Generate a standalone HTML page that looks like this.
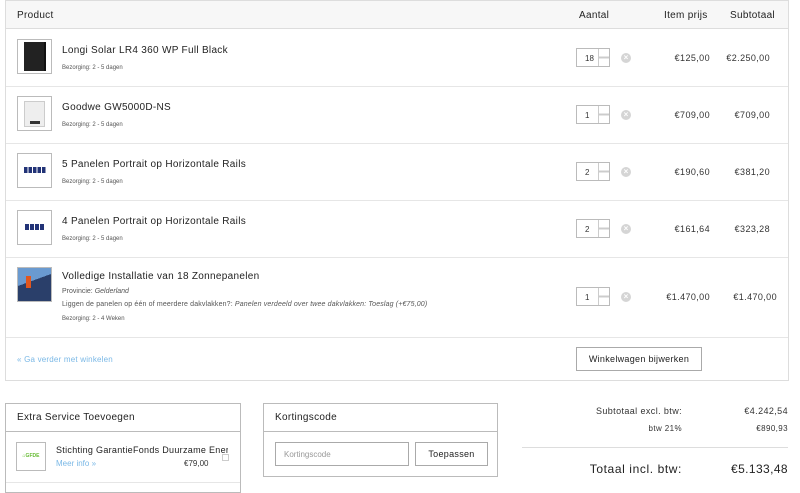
<!DOCTYPE html>
<html><head><meta charset="utf-8"><style>
*{box-sizing:border-box;margin:0;padding:0}
body{width:800px;height:490px;overflow:hidden;background:#fff;font-family:"Liberation Sans",sans-serif;color:#222;position:relative}
.abs{position:absolute;white-space:nowrap}
.box{position:absolute;border:1px solid #ddd}
.row{position:absolute;left:6px;width:782px;border-top:1px solid #e6e6e6}
.grp{position:absolute;left:0;width:800px;height:80px}
.thumb{position:absolute;left:11px;width:35px;height:35px;border:1px solid #bbb;background:#fff}
.name{position:absolute;left:56px;font-size:10px;letter-spacing:.3px;color:#222;white-space:nowrap}
.small{position:absolute;left:56px;font-size:6px;color:#555;white-space:nowrap}
.qty{position:absolute;left:570px;width:34px;height:19px;border:1px solid #bbb;font-size:8px;color:#333;padding:5px 0 0 8px;background:#fff}
.qty:after{content:"";position:absolute;right:0;top:0;width:10px;height:17px;border-left:1px solid #ccc;background:linear-gradient(#fff 45%,#ccc 45%,#ccc 55%,#fff 55%)}
.x{position:absolute;left:615px;width:10px;height:10px;border-radius:50%;background:#d5d5d5;color:#fff;font-size:8px;line-height:10px;text-align:center;font-weight:bold}
.p{position:absolute;font-size:9px;letter-spacing:.4px;color:#333;text-align:right;white-space:nowrap}
</style></head><body>
<div class="box" style="left:5px;top:0;width:784px;height:381px"></div>
<div class="abs" style="left:6px;top:1px;width:782px;height:28px;background:#f7f7f7;border-bottom:1px solid #ddd"></div>
<div class="abs" style="left:17px;top:10px;font-size:10px;letter-spacing:.3px">Product</div>
<div class="abs" style="left:579px;top:10px;font-size:10px;letter-spacing:.3px">Aantal</div>
<div class="abs" style="left:664px;top:10px;font-size:10px;letter-spacing:.3px">Item prijs</div>
<div class="abs" style="left:730px;top:10px;font-size:10px;letter-spacing:.3px">Subtotaal</div>

<div class="grp" style="top:29px">
<div class="thumb" style="left:17px;top:10px;background:#fff"><div style="position:absolute;left:6px;top:2px;width:22px;height:29px;background:#222;border-right:2px solid #111"></div></div>
<div class="name" style="left:62px;top:16px">Longi Solar LR4 360 WP Full Black</div>
<div class="small" style="left:62px;top:36px">Bezorging: 2 - 5 dagen</div>
<div class="qty" style="left:576px;top:19px">18</div><div class="x" style="left:621px;top:24px">×</div>
<div class="p" style="left:640px;top:24px;width:70px">€125,00</div><div class="p" style="left:700px;top:24px;width:70px">€2.250,00</div>
</div>
<div class="row" style="top:86px"></div>
<div class="grp" style="top:86px">
<div class="thumb" style="left:17px;top:10px"><div style="position:absolute;left:6px;top:4px;width:21px;height:26px;background:#eee;border:1px solid #ccc"></div><div style="position:absolute;left:12px;top:24px;width:10px;height:3px;background:#333"></div></div>
<div class="name" style="left:62px;top:16px">Goodwe GW5000D-NS</div>
<div class="small" style="left:62px;top:36px">Bezorging: 2 - 5 dagen</div>
<div class="qty" style="left:576px;top:19px">1</div><div class="x" style="left:621px;top:24px">×</div>
<div class="p" style="left:640px;top:24px;width:70px">€709,00</div><div class="p" style="left:700px;top:24px;width:70px">€709,00</div>
</div>
<div class="row" style="top:143px"></div>
<div class="grp" style="top:143px">
<div class="thumb" style="left:17px;top:10px"><div style="position:absolute;left:6px;top:13px;width:22px;height:6px;background:repeating-linear-gradient(90deg,#223377 0 3.5px,#fff 3.5px 4.5px)"></div></div>
<div class="name" style="left:62px;top:16px">5 Panelen Portrait op Horizontale Rails</div>
<div class="small" style="left:62px;top:36px">Bezorging: 2 - 5 dagen</div>
<div class="qty" style="left:576px;top:19px">2</div><div class="x" style="left:621px;top:24px">×</div>
<div class="p" style="left:640px;top:24px;width:70px">€190,60</div><div class="p" style="left:700px;top:24px;width:70px">€381,20</div>
</div>
<div class="row" style="top:200px"></div>
<div class="grp" style="top:200px">
<div class="thumb" style="left:17px;top:10px"><div style="position:absolute;left:7px;top:13px;width:19px;height:6px;background:repeating-linear-gradient(90deg,#223377 0 4px,#fff 4px 5px)"></div></div>
<div class="name" style="left:62px;top:16px">4 Panelen Portrait op Horizontale Rails</div>
<div class="small" style="left:62px;top:36px">Bezorging: 2 - 5 dagen</div>
<div class="qty" style="left:576px;top:19px">2</div><div class="x" style="left:621px;top:24px">×</div>
<div class="p" style="left:640px;top:24px;width:70px">€161,64</div><div class="p" style="left:700px;top:24px;width:70px">€323,28</div>
</div>
<div class="row" style="top:257px"></div>
<div class="grp" style="top:257px">
<div class="thumb" style="left:17px;top:10px;background:linear-gradient(160deg,#6a9ad0 0 40%,#2a3f6a 40%)"><div style="position:absolute;left:8px;top:8px;width:5px;height:12px;background:#e0561e"></div></div>
<div class="name" style="left:62px;top:14px">Volledige Installatie van 18 Zonnepanelen</div>
<div class="small" style="left:62px;top:31px;font-size:7px">Provincie: <i>Gelderland</i></div>
<div class="small" style="left:62px;top:44px;font-size:7px;letter-spacing:.15px">Liggen de panelen op één of meerdere dakvlakken?: <i>Panelen verdeeld over twee dakvlakken: Toeslag (+€75,00)</i></div>
<div class="small" style="left:62px;top:59px">Bezorging: 2 - 4 Weken</div>
<div class="qty" style="left:576px;top:30px">1</div><div class="x" style="left:621px;top:35px">×</div>
<div class="p" style="left:640px;top:35px;width:70px">€1.470,00</div><div class="p" style="left:700px;top:35px;width:77px">€1.470,00</div>
</div>
<div class="row" style="top:337px"></div>
<div class="abs" style="left:17px;top:355px;font-size:8px;letter-spacing:.2px;color:#7ab8e6">« Ga verder met winkelen</div>
<div class="abs" style="left:576px;top:347px;width:126px;height:24px;border:1px solid #aaa;font-size:9px;letter-spacing:.3px;text-align:center;line-height:22px">Winkelwagen bijwerken</div>

<div class="box" style="left:5px;top:403px;width:236px;height:90px;border-color:#bbb"></div>
<div class="abs" style="left:6px;top:431px;width:234px;border-top:1px solid #bbb"></div>
<div class="abs" style="left:17px;top:412px;font-size:10px;letter-spacing:.3px">Extra Service Toevoegen</div>
<div class="abs" style="left:16px;top:442px;width:30px;height:29px;border:1px solid #bbb;font-size:5px;color:#6b3;text-align:center;line-height:27px;font-weight:bold">⌂GFDE</div>
<div class="abs" style="left:56px;top:445px;width:172px;overflow:hidden;font-size:9px;letter-spacing:.3px">Stichting GarantieFonds Duurzame Energie</div>
<div class="abs" style="left:56px;top:459px;font-size:8px;color:#7ab8e6">Meer info »</div>
<div class="abs" style="left:184px;top:459px;font-size:8px;color:#333">€79,00</div>
<div class="abs" style="left:222px;top:454px;width:7px;height:7px;border:1px solid #ccc"></div>
<div class="abs" style="left:6px;top:482px;width:234px;border-top:1px solid #e6e6e6"></div>

<div class="box" style="left:263px;top:403px;width:235px;height:74px;border-color:#bbb"></div>
<div class="abs" style="left:264px;top:431px;width:233px;border-top:1px solid #bbb"></div>
<div class="abs" style="left:275px;top:412px;font-size:10px;letter-spacing:.3px">Kortingscode</div>
<div class="abs" style="left:275px;top:442px;width:134px;height:24px;border:1px solid #aaa;font-size:8px;color:#999;padding:7px 0 0 8px">Kortingscode</div>
<div class="abs" style="left:415px;top:442px;width:73px;height:24px;border:1px solid #aaa;font-size:9px;letter-spacing:.3px;text-align:center;line-height:22px">Toepassen</div>

<div class="p" style="left:540px;top:406px;width:142px">Subtotaal excl. btw:</div>
<div class="p" style="left:700px;top:406px;width:88px">€4.242,54</div>
<div class="p" style="left:560px;top:424px;width:122px;font-size:8px">btw 21%</div>
<div class="p" style="left:700px;top:424px;width:88px;font-size:8px">€890,93</div>
<div class="abs" style="left:522px;top:447px;width:266px;border-top:1px solid #ddd"></div>
<div class="p" style="left:540px;top:462px;width:142px;font-size:12px;letter-spacing:.6px;color:#222">Totaal incl. btw:</div>
<div class="p" style="left:700px;top:462px;width:88px;font-size:12px;letter-spacing:.4px;color:#222">€5.133,48</div>
</body></html>
